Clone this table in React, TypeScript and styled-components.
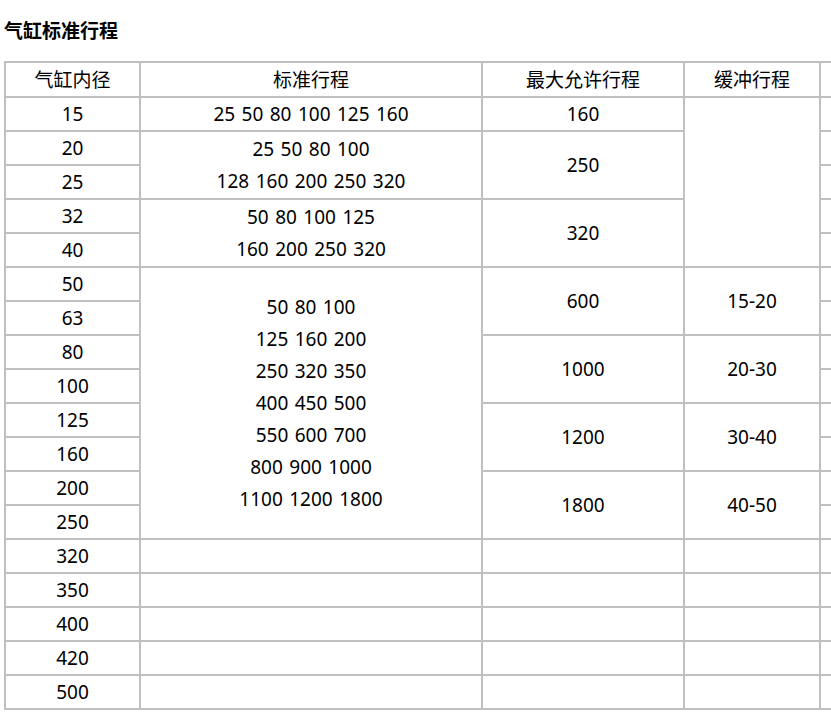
import React from 'react';
import styled, { createGlobalStyle } from 'styled-components';

const GlobalStyle = createGlobalStyle`
  html, body {
    margin: 0;
    padding: 0;
    overflow: hidden;
    background: #ffffff;
  }
  body {
    font-family: "Noto Sans", "Noto Sans CJK SC", sans-serif;
    color: #000000;
  }
`;

const Page = styled.div`
  padding: 0 4px;
`;

const Title = styled.h3`
  margin: 0;
  padding-top: 17px;
  font-size: 19px;
  line-height: 28px;
  font-weight: 700;
`;

const Table = styled.table`
  margin-top: 16px;
  border-collapse: collapse;
  table-layout: fixed;
  width: 951px;
  font-size: 19px;
  word-spacing: 1.5px;
`;

const Row = styled.tr<{ $head?: boolean }>`
  height: ${(p) => (p.$head ? 35 : 34)}px;
`;

const Th = styled.th`
  border: 2px solid #c0c0c0;
  padding: 0;
  font-weight: 400;
  line-height: 32px;
  text-align: center;
`;

const Td = styled.td`
  border: 2px solid #c0c0c0;
  padding: 0;
  line-height: 32px;
  text-align: center;
  vertical-align: middle;
`;

const Line = styled.div`
  white-space: nowrap;
`;

type Group = { span: number; lines: string[] };

const bores = [
  '15', '20', '25', '32', '40', '50', '63', '80', '100',
  '125', '160', '200', '250', '320', '350', '400', '420', '500',
];

const singles = (n: number): Group[] => Array.from({ length: n }, () => ({ span: 1, lines: [] }));

const strokes: Group[] = [
  { span: 1, lines: ['25 50 80 100 125 160'] },
  { span: 2, lines: ['25 50 80 100', '128 160 200 250 320'] },
  { span: 2, lines: ['50 80 100 125', '160 200 250 320'] },
  {
    span: 8,
    lines: [
      '50 80 100',
      '125 160 200',
      '250 320 350',
      '400 450 500',
      '550 600 700',
      '800 900 1000',
      '1100 1200 1800',
    ],
  },
  ...singles(5),
];

const maxStroke: Group[] = [
  { span: 1, lines: ['160'] },
  { span: 2, lines: ['250'] },
  { span: 2, lines: ['320'] },
  { span: 2, lines: ['600'] },
  { span: 2, lines: ['1000'] },
  { span: 2, lines: ['1200'] },
  { span: 2, lines: ['1800'] },
  ...singles(5),
];

const cushion: Group[] = [
  { span: 5, lines: [] },
  { span: 2, lines: ['15-20'] },
  { span: 2, lines: ['20-30'] },
  { span: 2, lines: ['30-40'] },
  { span: 2, lines: ['40-50'] },
  ...singles(5),
];

const extra: Group[] = singles(bores.length);

// map: row index -> group starting there
const byStart = (groups: Group[]) => {
  const m = new Map<number, Group>();
  let i = 0;
  groups.forEach((g) => {
    m.set(i, g);
    i += g.span;
  });
  return m;
};

const columns = [strokes, maxStroke, cushion, extra].map(byStart);

const Cell = ({ g }: { g: Group }) => (
  <Td rowSpan={g.span > 1 ? g.span : undefined}>
    {g.lines.map((l) => (
      <Line key={l}>{l}</Line>
    ))}
  </Td>
);

export default function App() {
  return (
    <Page>
      <GlobalStyle />
      <Title>气缸标准行程</Title>
      <Table>
        <colgroup>
          <col style={{ width: 135 }} />
          <col style={{ width: 342 }} />
          <col style={{ width: 202 }} />
          <col style={{ width: 136 }} />
          <col style={{ width: 136 }} />
        </colgroup>
        <thead>
          <Row $head>
            <Th>气缸内径</Th>
            <Th>标准行程</Th>
            <Th>最大允许行程</Th>
            <Th>缓冲行程</Th>
            <Th>&nbsp;</Th>
          </Row>
        </thead>
        <tbody>
          {bores.map((b, i) => (
            <Row key={b}>
              <Td>{b}</Td>
              {columns.map((col, c) => {
                const g = col.get(i);
                return g ? <Cell key={c} g={g} /> : null;
              })}
            </Row>
          ))}
        </tbody>
      </Table>
    </Page>
  );
}
